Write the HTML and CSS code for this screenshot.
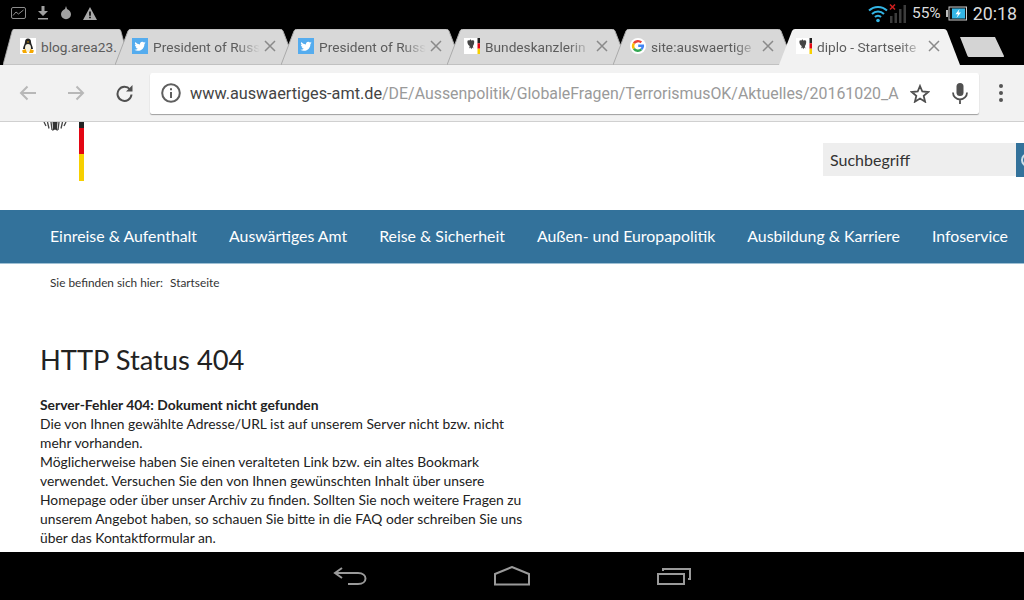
FILE: index.html
```html
<!DOCTYPE html>
<html lang="de">
<head>
  <meta charset="UTF-8">
  <title>diplo - Startseite</title>
  <link rel="stylesheet" href="styles.css">
</head>
<body>
  <svg class="defs" width="0" height="0">
    <symbol id="tab-shape" viewBox="0 0 181 36" preserveAspectRatio="none">
      <path d="M0 36 L13 2 Q14 0 16 0 H165 Q167 0 168 2 L181 36 Z"/>
    </symbol>
    <symbol id="twitter" viewBox="0 0 16 16">
      <rect width="16" height="16" fill="#55acee"/>
      <path fill="#fff" d="M13.600 4.600c-.4.2-.9.3-1.300.4.500-.3.800-.7 1-1.200-.4.300-.9.500-1.400.6a2.300 2.300 0 0 0-3.900 2.100A6.500 6.500 0 0 1 3.200 4.100a2.300 2.300 0 0 0 .7 3c-.4 0-.7-.1-1-.3 0 1.100.8 2 1.800 2.300-.3.1-.7.1-1 0 .3.900 1.100 1.600 2.100 1.600a4.600 4.600 0 0 1-3.400 1c1 .6 2.200 1 3.500 1 4.300 0 6.600-3.500 6.500-6.800.5-.3.900-.6 1.200-1.300z"/>
    </symbol>
    <symbol id="bund" viewBox="0 0 16 16">
      <rect width="16" height="16" fill="#fff"/>
      <path fill="#444" d="M6 1.500c1 0 1.300.7 1.500 1.200 1-.6 2.200-.5 2.600.1.300 1.800-.1 4-1.200 5.300l.5 2.500-1.200-1-.9 1.600-.9-1.600-1.200 1 .5-2.500C3.600 6.800 3.200 4.600 3.500 2.800c.5-.6 1.500-.7 2.200-.3z"/>
      <rect x="13.500" y="0" width="2.500" height="5.300" fill="#222"/>
      <rect x="13.500" y="5.300" width="2.500" height="5.400" fill="#e30613"/>
      <rect x="13.500" y="10.700" width="2.500" height="5.300" fill="#f7d000"/>
    </symbol>
    <symbol id="close" viewBox="0 0 12 12">
      <path d="M1 1 L11 11 M11 1 L1 11" fill="none" stroke="#8a8a8a" stroke-width="1.500"/>
    </symbol>
  </svg>

  <div class="screen">
    <div class="statusbar">
      <div class="status-left">
        <svg width="15" height="12" viewBox="0 0 15 12"><rect x="0.500" y="0.500" width="14" height="11" rx="1.500" fill="none" stroke="#8c8c8c"/><path d="M2 8.500 L5 5 L7.500 7 L12.500 3" fill="none" stroke="#8c8c8c"/></svg>
        <svg width="12" height="14" viewBox="0 0 12 14"><path fill="#a0a0a0" d="M4.500 0h3v5H11L6 10 1 5h3.500z"/><rect x="1" y="12" width="10" height="1.500" fill="#a0a0a0"/></svg>
        <svg width="12" height="14" viewBox="0 0 12 14"><path fill="#a0a0a0" d="M6 0 L7 3 C9.500 4 11 6 11 8.300A5 5 0 0 1 1 8.300C1 6 2.500 4 5 3z"/></svg>
        <svg width="14" height="13" viewBox="0 0 14 13"><path fill="#a8a8a8" fill-rule="evenodd" d="M7 0 L14 13 H0z M6.200 4.500v4.200h1.600V4.500z M6.200 9.700v1.600h1.600V9.700z"/></svg>
      </div>
      <div class="status-right">
        <svg width="20" height="20" viewBox="0 0 20 20"><g fill="none" stroke="#33b5e5" stroke-width="2"><path d="M1 7.500a13 13 0 0 1 18 0"/><path d="M4 11a8.500 8.500 0 0 1 12 0"/><path d="M7 14a4 4 0 0 1 6 0"/></g><circle cx="10" cy="17.500" r="1.800" fill="#33b5e5"/></svg>
        <svg class="signal" width="17" height="20" viewBox="0 0 17 20"><path fill="#3c3c3c" d="M1 13h2.500v7H1z M5.500 10H8v10H5.500z M10 6h2.500v14H10z M14.500 2H17v18h-2.500z"/><path d="M1 1.500 L6 6.500 M6 1.500 L1 6.500" stroke="#d01f1f" stroke-width="1.500"/></svg>
        <span class="battery-pct">55%</span>
        <svg class="battery" width="21" height="15" viewBox="0 0 21 15"><path fill="#bbb" d="M0 4h2v7H0z"/><rect x="3" y="1" width="17.500" height="13" fill="#111" stroke="#ccc"/><rect x="6" y="2.500" width="13" height="10" fill="#33b5e5"/><path fill="#fff" d="M13.500 3 L9.500 8.300h2.500L10.500 12l4.500-5.500h-2.500z"/></svg>
        <span class="clock">20:18</span>
      </div>
    </div>

    <div class="tabstrip">
      <div class="tab tab-first">
        <svg class="tab-bg"><use href="#tab-shape"/></svg>
        <svg class="favicon" viewBox="0 0 16 16"><rect width="16" height="16" fill="#fff"/><path fill="#222" d="M8 .500c2 0 3 1.500 3 3.500 0 2 1.800 4 2 7H3c.2-3 2-5 2-7 0-2 1-3.500 3-3.500z"/><ellipse cx="8" cy="10" rx="3" ry="4" fill="#f4f0e0"/><path fill="#f5a800" d="M7 3.500h2L8 5z M2 12.500 5.500 11 7 15H3z M14 12.500 10.500 11 9 15h4z"/></svg>
        <span class="tab-title">blog.area23.</span>
      </div>
      <div class="tab">
        <svg class="tab-bg"><use href="#tab-shape"/></svg>
        <svg class="favicon"><use href="#twitter"/></svg>
        <span class="tab-title">President of Russ</span>
        <svg class="tab-close"><use href="#close"/></svg>
      </div>
      <div class="tab">
        <svg class="tab-bg"><use href="#tab-shape"/></svg>
        <svg class="favicon"><use href="#twitter"/></svg>
        <span class="tab-title">President of Russ</span>
        <svg class="tab-close"><use href="#close"/></svg>
      </div>
      <div class="tab">
        <svg class="tab-bg"><use href="#tab-shape"/></svg>
        <svg class="favicon"><use href="#bund"/></svg>
        <span class="tab-title">Bundeskanzlerin</span>
        <svg class="tab-close"><use href="#close"/></svg>
      </div>
      <div class="tab">
        <svg class="tab-bg"><use href="#tab-shape"/></svg>
        <svg class="favicon" viewBox="0 0 16 16"><circle cx="8" cy="8" r="8" fill="#fff"/><path d="M14 7.800H8.200 M13 7.800a5 5 0 0 1-1.700 3.500" fill="none" stroke="#4285f4" stroke-width="2.400"/><path d="M3.900 5.300A5 5 0 0 1 11.300 4.400" fill="none" stroke="#ea4335" stroke-width="2.400"/><path d="M3.900 10.700a5 5 0 0 1 0-5.400" fill="none" stroke="#fbbc05" stroke-width="2.400"/><path d="M3.900 10.700a5 5 0 0 0 7.400.7" fill="none" stroke="#34a853" stroke-width="2.400"/></svg>
        <span class="tab-title">site:auswaertige</span>
        <svg class="tab-close"><use href="#close"/></svg>
      </div>
      <div class="tab tab-active">
        <svg class="tab-bg"><use href="#tab-shape"/></svg>
        <svg class="favicon"><use href="#bund"/></svg>
        <span class="tab-title">diplo - Startseite</span>
        <svg class="tab-close"><use href="#close"/></svg>
      </div>
      <svg class="new-tab" width="46" height="20" viewBox="0 0 46 20"><path fill="#d4d4d4" d="M1 0 H36 L45 19 Q45.500 20 44 20 H10 Q9 20 8.500 19 Z"/></svg>
    </div>

    <div class="toolbar">
      <button class="tool-btn">
        <svg width="18" height="16" viewBox="0 0 18 16"><path d="M17 8H2 M8.500 1.500 L2 8 L8.500 14.500" fill="none" stroke="#b8b8b8" stroke-width="2"/></svg>
      </button>
      <button class="tool-btn">
        <svg width="18" height="16" viewBox="0 0 18 16"><path d="M1 8H16 M9.500 1.500 L16 8 L9.500 14.500" fill="none" stroke="#b8b8b8" stroke-width="2"/></svg>
      </button>
      <button class="tool-btn">
        <svg width="17" height="17" viewBox="0 0 17 17"><path d="M14 4.500A7 7 0 1 0 15.500 9.500" fill="none" stroke="#505050" stroke-width="2"/><path fill="#505050" d="M10 6.500 H16.500 V0z"/></svg>
      </button>
      <div class="omnibox">
        <svg class="info" width="20" height="20" viewBox="0 0 20 20"><circle cx="10" cy="10" r="8.800" fill="none" stroke="#5f5f5f" stroke-width="2"/><path fill="#5f5f5f" d="M9 9h2v6H9z M9 5.300h2v2H9z"/></svg>
        <div class="url"><span class="url-host">www.auswaertiges-amt.de</span>/DE/Aussenpolitik/GlobaleFragen/TerrorismusOK/Aktuelles/20161020_A</div>
        <svg class="star" width="20" height="19" viewBox="0 0 20 19"><path d="M10 2 L12.300 7.500 L18.200 8 L13.700 11.900 L15.100 17.700 L10 14.600 L4.900 17.700 L6.300 11.900 L1.800 8 L7.700 7.500 Z" fill="none" stroke="#505050" stroke-width="1.800"/></svg>
        <svg class="mic" width="16" height="21" viewBox="0 0 16 21"><rect x="4.500" y="0" width="7" height="13" rx="3.500" fill="#505050"/><path d="M1 9.500a7 7 0 0 0 14 0 M8 16.500V21" fill="none" stroke="#505050" stroke-width="1.800"/></svg>
      </div>
      <div class="menu-dots"><i></i><i></i><i></i></div>
    </div>

    <div class="page">
      <header class="site-header">
        <svg class="eagle" width="26" height="10" viewBox="0 0 26 10"><g fill="none" stroke="#444" stroke-width="1.300"><path d="M2 0l2 4 M5.500 0l1.500 6.500 M9 0l1 8 M17 0l-1 8 M20.500 0L19 6.500 M24 0l-2 4"/></g><path fill="#333" d="M10.500 0h5l-.5 6 .8 3-2.800-1.500L10.200 9l.8-3z"/></svg>
        <div class="flag"><span class="flag-black"></span><span class="flag-red"></span><span class="flag-gold"></span></div>
        <div class="search">
          <span class="search-input">Suchbegriff</span>
          <span class="search-btn"><i></i></span>
        </div>
      </header>

      <nav class="main-nav">
        <a>Einreise &amp; Aufenthalt</a>
        <a>Auswärtiges Amt</a>
        <a>Reise &amp; Sicherheit</a>
        <a>Außen- und Europapolitik</a>
        <a>Ausbildung &amp; Karriere</a>
        <a>Infoservice</a>
      </nav>

      <div class="breadcrumb">
        <span>Sie befinden sich hier:</span>
        <span>Startseite</span>
      </div>

      <main class="content">
        <h1>HTTP Status 404</h1>
        <p>
          <strong>Server-Fehler 404: Dokument nicht gefunden</strong><br>
          Die von Ihnen gewählte Adresse/URL ist auf unserem Server nicht bzw. nicht<br>
          mehr vorhanden.<br>
          Möglicherweise haben Sie einen veralteten Link bzw. ein altes Bookmark<br>
          verwendet. Versuchen Sie den von Ihnen gewünschten Inhalt über unsere<br>
          Homepage oder über unser Archiv zu finden. Sollten Sie noch weitere Fragen zu<br>
          unserem Angebot haben, so schauen Sie bitte in die FAQ oder schreiben Sie uns<br>
          über das Kontaktformular an.
        </p>
      </main>
    </div>

    <div class="navbar">
      <svg width="34" height="20" viewBox="0 0 34 20"><path d="M9 2 L2 7 L9 12 M2 7 H25 C35 7 35 18 25 18 H15" fill="none" stroke="#9a9a9a" stroke-width="2"/></svg>
      <svg width="36" height="20" viewBox="0 0 36 20"><path d="M1 8 L18 1 L35 8 V18.500 H1 Z" fill="none" stroke="#9a9a9a" stroke-width="2"/></svg>
      <svg width="34" height="18" viewBox="0 0 34 18"><path d="M1 7 H27 V17 H1 Z M6 4 V2 H33 V12 H31" fill="none" stroke="#9a9a9a" stroke-width="2"/></svg>
    </div>
  </div>
</body>
</html>
```

FILE: styles.css
```css
body {
  margin: 0;
  background: #000;
  font-family: Roboto, sans-serif;
}

.defs {
  position: absolute;
}

.screen {
  width: 1024px;
  height: 600px;
  display: flex;
  flex-direction: column;
  overflow: hidden;
}

.statusbar {
  height: 29px;
  flex-shrink: 0;
  background: #000;
  display: flex;
  justify-content: space-between;
  align-items: center;
  padding: 0 7px 3px 11px;
  box-sizing: border-box;
}

.status-left {
  display: flex;
  align-items: center;
  gap: 11px;
}

.status-right {
  display: flex;
  align-items: center;
  color: #dcdcdc;
}

.signal {
  margin-left: 1px;
}

.battery-pct {
  font-size: 15.500px;
  margin-left: 6px;
}

.battery {
  margin-left: 5px;
}

.clock {
  font-size: 17.800px;
  margin-left: 6px;
}

.tabstrip {
  height: 36px;
  flex-shrink: 0;
  background: #000;
  display: flex;
  padding-left: 3px;
}

.tab {
  position: relative;
  width: 181px;
  margin-right: -15px;
  flex-shrink: 0;
  display: flex;
  align-items: center;
  padding: 0 0 0 17px;
  box-sizing: border-box;
  fill: #d8d8d8;
}

.tab-first {
  width: 127px;
}

.tab-active {
  fill: #f2f2f2;
  z-index: 1;
}

.tab-bg {
  position: absolute;
  left: 0;
  top: 0;
  width: 100%;
  height: 100%;
  stroke: #aaa;
  stroke-width: 1;
}

.tab-active .tab-bg {
  stroke: none;
}

.favicon {
  position: relative;
  width: 16px;
  height: 16px;
  flex-shrink: 0;
  margin-top: -2px;
}

.tab-title {
  position: relative;
  font-size: 13.700px;
  color: #5c5c5c;
  margin-left: 5px;
  width: 107px;
  white-space: nowrap;
  overflow: hidden;
  -webkit-mask-image: linear-gradient(to right, #000 78%, transparent 100%);
  mask-image: linear-gradient(to right, #000 78%, transparent 100%);
  margin-top: -1px;
}

.tab-first .tab-title {
  width: 84px;
  -webkit-mask-image: none;
  mask-image: none;
}

.tab-close {
  position: relative;
  width: 12px;
  height: 12px;
  margin-left: 4px;
  margin-top: -3px;
}

.new-tab {
  margin-left: 14px;
  margin-top: 8px;
  flex-shrink: 0;
}

.toolbar {
  height: 56px;
  flex-shrink: 0;
  background: #f2f2f2;
  border-bottom: 1px solid #d0d0d0;
  display: flex;
  align-items: center;
  padding: 0 0 0 4px;
  box-sizing: content-box;
}

.tool-btn {
  width: 48px;
  height: 40px;
  padding: 0;
  border: none;
  background: transparent;
  display: flex;
  align-items: center;
  justify-content: center;
}

.omnibox {
  width: 829px;
  height: 41px;
  margin-left: 2px;
  background: #fff;
  border-radius: 2px;
  box-shadow: 0 1px 1px rgba(0, 0, 0, 0.35);
  display: flex;
  align-items: center;
  padding: 0 11px;
  box-sizing: border-box;
}

.url {
  margin-left: 9px;
  width: 710px;
  flex-shrink: 0;
  font-size: 15.900px;
  color: #9a9a9a;
  white-space: nowrap;
}

.url-host {
  color: #444;
  font-size: 16.250px;
}

.star {
  margin-left: 10px;
  flex-shrink: 0;
}

.mic {
  margin-left: 22px;
  flex-shrink: 0;
}

.menu-dots {
  display: flex;
  flex-direction: column;
  gap: 3px;
  margin-left: 20px;
}

.menu-dots i {
  width: 4px;
  height: 4px;
  border-radius: 50%;
  background: #555;
}

.page {
  flex: 1;
  min-height: 0;
  background: #fff;
  overflow: hidden;
  color: #222;
  font-family: Lato, sans-serif;
}

.site-header {
  height: 88px;
  display: flex;
  align-items: flex-start;
  padding-left: 42px;
  overflow: hidden;
  box-sizing: border-box;
}

.flag {
  width: 5px;
  margin-left: 11px;
  display: flex;
  flex-direction: column;
}

.flag-black {
  height: 6px;
  background: #222;
}

.flag-red {
  height: 26px;
  background: #e30613;
}

.flag-gold {
  height: 27px;
  background: #f7d000;
}

.search {
  margin-left: auto;
  margin-top: 21px;
  display: flex;
  align-items: flex-start;
}

.search-input {
  width: 193px;
  height: 33px;
  background: #eee;
  font-size: 16px;
  line-height: 33px;
  padding-left: 7px;
  box-sizing: border-box;
  color: #333;
}

.search-btn {
  width: 8px;
  height: 34px;
  background: #33729b;
  overflow: hidden;
  display: flex;
  align-items: center;
}

.search-btn i {
  width: 10px;
  height: 10px;
  margin-left: 5px;
  flex-shrink: 0;
  border: 2px solid #cfe0ea;
  border-radius: 50%;
}

.main-nav {
  height: 54px;
  background: #33729b;
  border-bottom: 1px solid #9fc0d4;
  display: flex;
  align-items: center;
  gap: 32px;
  padding: 0 0 2px 50px;
  white-space: nowrap;
  overflow: hidden;
  box-sizing: border-box;
}

.main-nav a {
  color: #fff;
  font-size: 15.850px;
}

.breadcrumb {
  display: flex;
  gap: 7px;
  padding: 11px 0 0 50px;
  font-size: 11.800px;
  line-height: 16px;
  color: #333;
}

.content {
  padding: 51px 0 0 40px;
}

.content h1 {
  margin: 0;
  font-size: 27.300px;
  font-weight: 400;
  line-height: 36px;
}

.content p {
  margin: 17px 0 0 0;
  font-size: 13.850px;
  line-height: 19px;
  color: #222;
}

.navbar {
  height: 48px;
  flex-shrink: 0;
  background: #000;
  display: flex;
  align-items: center;
  justify-content: center;
  gap: 127px;
}
```
